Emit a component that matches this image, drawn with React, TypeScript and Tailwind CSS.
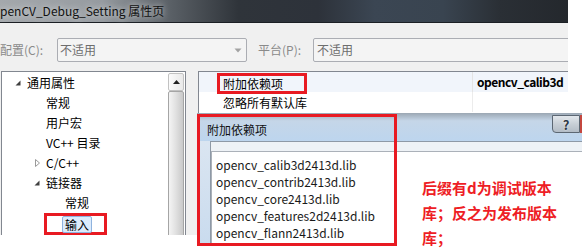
import React from 'react';

type TreeItem = {
  label: string;
  indent: string;
  expander?: 'open' | 'closed';
};

const treeItems: TreeItem[] = [
  { label: '通用属性', indent: 'pl-[11px]', expander: 'open' },
  { label: '常规', indent: 'pl-[44px]' },
  { label: '用户宏', indent: 'pl-[44px]' },
  { label: 'VC++ 目录', indent: 'pl-[44px]' },
  { label: 'C/C++', indent: 'pl-[30px]', expander: 'closed' },
  { label: '链接器', indent: 'pl-[30px]', expander: 'open' },
  { label: '常规', indent: 'pl-[63px]' },
];

const libs = [
  'opencv_calib3d2413d.lib',
  'opencv_contrib2413d.lib',
  'opencv_core2413d.lib',
  'opencv_features2d2413d.lib',
  'opencv_flann2413d.lib',
];

const Expander: React.FC<{ kind: 'open' | 'closed' }> = ({ kind }) =>
  kind === 'open' ? (
    <svg width="14" height="10" viewBox="0 0 14 10" className="shrink-0">
      <polygon points="7.5,2.5 7.5,7.5 2.5,7.5" fill="#404040" />
    </svg>
  ) : (
    <svg width="14" height="10" viewBox="0 0 14 10" className="shrink-0">
      <polygon points="3.5,1.5 7.5,5 3.5,8.5" fill="none" stroke="#9a9a9a" strokeWidth="1" />
    </svg>
  );

const ComboArrow = () => (
  <svg width="8" height="5" viewBox="0 0 8 5">
    <polygon points="0.5,0.5 7.5,0.5 4,4.5" fill="#a3a3a3" />
  </svg>
);

export default function App() {
  return (
    <div className="relative w-[582px] h-[251px] bg-white overflow-hidden font-['Noto_Sans_CJK_SC',sans-serif] text-[12px] text-black">
      {/* main property page window, cropped */}
      <div className="w-[568px] h-[235px] bg-[#f0f0f0] overflow-hidden flex flex-col">
        <div className="h-[23px] shrink-0 border-b border-[#1b1f24] bg-[linear-gradient(90deg,#a4a8ac_0%,#969ba0_18%,#5a6066_30%,#2f343a_42%,#2d323a_56%,#3b4653_66%,#394450_78%,#2a2f35_88%,#24282d_100%)] flex items-center">
          <span className="leading-[16px] text-[#111] [text-shadow:0_0_6px_#e6e8ea]">penCV_Debug_Setting 属性页</span>
        </div>

        <div className="mt-[15px] h-[24px] shrink-0 flex items-center">
          <span className="w-[57px] shrink-0 text-[#8a8a8a]">配置(C):</span>
          <div className="w-[190px] h-[24px] shrink-0 border border-[#abadb3] rounded-[2px] bg-[#f4f4f4] flex items-center pl-[2px] pr-[4px]">
            <span className="flex-1 text-[#6d6d6d]">不适用</span>
            <ComboArrow />
          </div>
          <span className="ml-[11px] w-[55px] shrink-0 text-[#8a8a8a]">平台(P):</span>
          <div className="w-[300px] h-[24px] shrink-0 border border-[#abadb3] rounded-[2px] bg-[#f4f4f4] flex items-center pl-[3px]">
            <span className="text-[#6d6d6d]">不适用</span>
          </div>
        </div>

        <div className="mt-[9px] flex">
          {/* tree */}
          <div className="ml-[1px] w-[185px] h-[180px] shrink-0 border border-[#828790] bg-white flex">
            <div className="flex-1 pt-[1px]">
              {treeItems.map((item, i) => (
                <div key={i} className={`h-[20px] flex items-center ${item.indent}`}>
                  {item.expander && <Expander kind={item.expander} />}
                  <span className="leading-[16px] whitespace-nowrap">{item.label}</span>
                </div>
              ))}
              <div className="h-[20px] pl-[42px]">
                <div className="h-[22px] w-[63px] border-[3px] border-[#e81a22] pl-[15px] flex items-center">
                  <span className="h-[17px] px-[2px] leading-[15px] bg-[#dcebfc] border border-[#8fb3de] rounded-[2px]">输入</span>
                </div>
              </div>
            </div>
            <div className="w-[16px] mr-[1px] flex flex-col">
              <div className="mt-[1px] h-[18px] border border-[#c2c2c2] rounded-[2px] bg-[linear-gradient(90deg,#fbfbfb,#e9e9e9)] flex items-center justify-center">
                <svg width="7" height="4" viewBox="0 0 7 4">
                  <polygon points="3.5,0 7,4 0,4" fill="#222" />
                </svg>
              </div>
              <div className="flex-1 border border-[#a5a5a5] rounded-[2px] bg-[linear-gradient(90deg,#f4f4f4_0%,#e2e2e2_45%,#c9c9c9_100%)]" />
            </div>
          </div>

          {/* property grid */}
          <div className="ml-[12px] w-[370px] h-[180px] shrink-0 border-l border-t border-[#828790] bg-white">
            <div className="h-[20px] flex bg-[#f1f5fb]">
              <div className="w-[274px] shrink-0 border-r border-[#e4e4e4] pl-[18px]">
                <div className="mt-[1px] w-[90px] h-[21px] border-[3px] border-[#e81a22] pl-[3px] flex items-center">
                  <span className="leading-[15px] whitespace-nowrap">附加依赖项</span>
                </div>
              </div>
              <div className="pl-[4px] flex items-center font-bold whitespace-nowrap tracking-[-0.5px]">opencv_calib3d</div>
            </div>
            <div className="h-[20px] flex">
              <div className="w-[274px] shrink-0 border-r border-[#ececec] pl-[24px] flex items-center">
                <span className="leading-[15px]">忽略所有默认库</span>
              </div>
            </div>
          </div>
        </div>
      </div>

      {/* 附加依赖项 dialog over the page */}
      <div className="absolute left-[197px] top-[113px] w-[385px] h-[133px] flex flex-col bg-[linear-gradient(180deg,#dfe8f2_0%,#c9dbee_100%)]">
        <div className="relative h-[28px] shrink-0 bg-[linear-gradient(180deg,#9ba7b3_0%,#c5d6e8_28%,#bdd5ee_100%)]">
          <div className="pl-[10px] pt-[9px] leading-[16px] text-[#111]">附加依赖项</div>
          <div className="absolute right-[2px] top-[2px] w-[28px] h-[18px] border border-[#5c6773] rounded-bl-[4px] bg-[linear-gradient(180deg,#e2e7ec_0%,#c8cfd6_50%,#b3bcc6_100%)] flex items-center justify-center text-[13px] leading-none font-bold text-[#2f3a46] [text-shadow:0_0_2px_#ffffff]">
            ?
          </div>
          <div className="absolute right-0 top-[2px] w-[2px] h-[18px] bg-[#c4473f]" />
        </div>
        <div className="flex-1 ml-[13px] border-l border-t border-[#8e99a6] bg-[#eef2f6] pt-[9px]">
          <div className="h-full border-l border-t border-[#abb1b9] bg-white pl-[4px] pt-[4px]">
            {libs.map(l => (
              <div key={l} className="h-[17px] leading-[17px] text-[#1a1a1a] whitespace-nowrap">{l}</div>
            ))}
          </div>
        </div>
      </div>

      {/* annotations */}
      <div className="absolute left-[197px] top-[114px] w-[200px] h-[132px] border-[3px] border-[#e81a22]" />
      <div className="absolute left-[422px] top-[175px] text-[15px] leading-[25px] font-bold text-[#ee1d25]">
        <div>后缀有d为调试版本</div>
        <div>库；反之为发布版本</div>
        <div>库；</div>
      </div>
    </div>
  );
}
